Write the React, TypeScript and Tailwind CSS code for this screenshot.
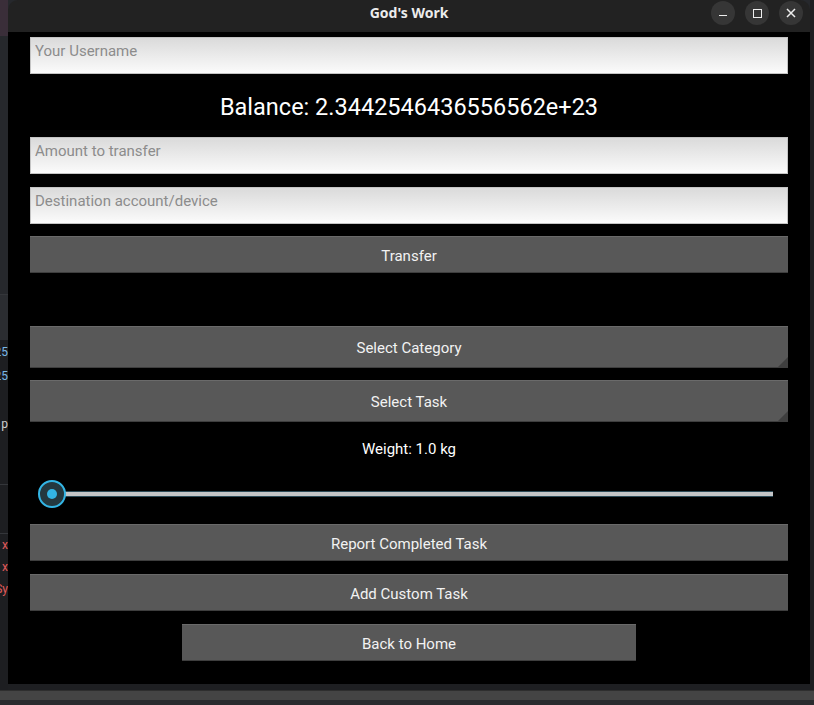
import { useState } from 'react';

const font = { fontFamily: 'Roboto, "Noto Sans", sans-serif' };

function TextField({ placeholder }: { placeholder: string }) {
  return (
    <input
      placeholder={placeholder}
      className="h-[37px] w-full border border-[#c4c4c4] bg-gradient-to-b from-[#dadada] to-[#fbfbfb] px-[4px] pb-[10px] text-[15px] text-[#333] placeholder:text-[#8c8c8c] outline-none"
    />
  );
}

function KvButton({ label, tall, spinner, className = '' }: { label: string; tall?: boolean; spinner?: boolean; className?: string }) {
  return (
    <button
      className={`relative flex w-full items-center justify-center border-t border-t-[#6a6a6a] border-b border-b-[#3e3e3e] bg-[#585858] pt-[3px] text-[15px] text-[#f2f2f2] ${tall ? 'h-[42px]' : 'h-[37px]'} ${className}`}
    >
      {label}
      {spinner && (
        <span className="absolute bottom-0 right-0 h-0 w-0 border-l-[10px] border-l-transparent border-b-[10px] border-b-[#3f3f3f]" />
      )}
    </button>
  );
}

function WindowButton({ children }: { children: React.ReactNode }) {
  return (
    <div className="flex h-[24px] w-[24px] items-center justify-center rounded-full bg-[#363636] text-[#eee]">
      {children}
    </div>
  );
}

export default function App() {
  const [weight] = useState(1.0);

  return (
    <div className="flex h-[705px] w-[814px] flex-col overflow-hidden bg-[#26282c]" style={font}>
      <div className="flex h-[690px]">
        {/* desktop behind, left side */}
        <div className="flex w-[8px] flex-col overflow-hidden bg-[#1d1e21] text-[12px] leading-none">
          <div className="h-[36px] shrink-0 bg-[#3a2e39]" />
          <div className="h-[258px] shrink-0 bg-[#26282c]" />
          <div className="h-[46px] shrink-0 border-t border-[#34363a] bg-[#2b2d31]" />
          <div className="flex h-[24px] shrink-0 items-center justify-end text-[#79b8e8]">25</div>
          <div className="flex h-[24px] shrink-0 items-center justify-end text-[#79b8e8]">25</div>
          <div className="h-[24px] shrink-0" />
          <div className="flex h-[24px] shrink-0 items-center justify-end text-[#cfcfcf]">p</div>
          <div className="h-[49px] shrink-0 border-b border-[#34363a]" />
          <div className="h-[49px] shrink-0 border-b border-[#34363a]" />
          <div className="flex h-[22px] shrink-0 items-center justify-end text-[#e05a5a]">x</div>
          <div className="flex h-[22px] shrink-0 items-center justify-end text-[#e05a5a]">x</div>
          <div className="flex h-[22px] shrink-0 items-center justify-end text-[#e05a5a]">Sy</div>
          <div className="flex-1" />
        </div>

        {/* app window */}
        <div className="flex w-[802px] flex-col">
          <div className="relative flex h-[32px] items-center justify-center rounded-t-[10px] bg-[#222222] pb-[8px]">
            <span className="text-[14px] font-bold text-[#ececec]" style={{ fontFamily: '"Noto Sans", "DejaVu Sans", sans-serif' }}>
              God's Work
            </span>
            <div className="absolute right-[7px] top-[1px] flex gap-[10px]">
              <WindowButton>
                <span className="mt-[5px] h-[1.5px] w-[8px] bg-[#eee]" />
              </WindowButton>
              <WindowButton>
                <span className="h-[9px] w-[9px] border-[1.5px] border-[#eee]" />
              </WindowButton>
              <WindowButton>
                <svg width="10" height="10" viewBox="0 0 10 10" stroke="#eee" strokeWidth="1.5">
                  <path d="M1 1 L9 9 M9 1 L1 9" />
                </svg>
              </WindowButton>
            </div>
          </div>

          <div className="flex h-[652px] flex-col bg-black px-[22px] pt-[5px]">
            <TextField placeholder="Your Username" />
            <div className="flex h-[63px] items-center justify-center pt-[4px] text-[23.5px] text-white">
              Balance: 2.3442546436556562e+23
            </div>
            <TextField placeholder="Amount to transfer" />
            <div className="h-[13px]" />
            <TextField placeholder="Destination account/device" />
            <div className="h-[12px]" />
            <KvButton label="Transfer" />
            <div className="h-[53px]" />
            <KvButton label="Select Category" tall spinner />
            <div className="h-[12px]" />
            <KvButton label="Select Task" tall spinner />
            <div className="flex h-[54px] items-center justify-center pt-[1px] text-[15px] text-white">
              Weight: {weight.toFixed(1)} kg
            </div>
            <div className="relative h-[36px]">
              <div className="absolute left-[22px] right-[15px] top-[15px] h-[6px] border-y border-[#2b4a57] bg-[#c3c5c7]" />
              <div className="absolute left-[8px] top-[4px] flex h-[28px] w-[28px] items-center justify-center rounded-full border-2 border-[#33b5e5] bg-[#24383f]">
                <span className="h-[10px] w-[10px] rounded-full bg-[#33b5e5]" />
              </div>
            </div>
            <div className="h-[12px]" />
            <KvButton label="Report Completed Task" />
            <div className="h-[13px]" />
            <KvButton label="Add Custom Task" />
            <div className="h-[13px]" />
            <div className="flex justify-center">
              <KvButton label="Back to Home" className="!w-[454px]" />
            </div>
          </div>
          <div className="h-[6px] bg-[#1e1f22]" />
        </div>

        {/* desktop behind, right side */}
        <div className="w-[4px] bg-[#1d1e21]" />
      </div>
      <div className="h-[10px] border-t border-[#2e2e2e] bg-[#444444]" />
      <div className="flex-1 bg-[#2a2b2e]" />
    </div>
  );
}
